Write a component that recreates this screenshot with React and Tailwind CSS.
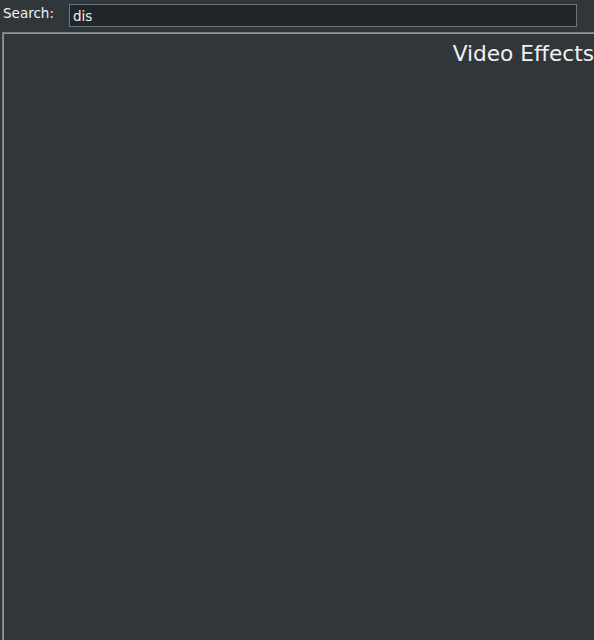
export default function App() {
  return (
    <div
      className="flex h-[640px] w-[594px] flex-col overflow-hidden bg-[#31363b] text-[#eff0f1]"
      style={{ fontFamily: '"DejaVu Sans", sans-serif' }}
    >
      <div className="flex h-[32px] items-start">
        <span className="ml-[3px] mt-[5px] w-[66px] text-[13.5px] leading-[16px]">Search:</span>
        <div className="mt-[4px] flex h-[23px] w-[508px] items-center border border-[#6b777b] bg-[#232629] pl-[3px] pt-[2px] text-[13.5px]">
          dis
        </div>
      </div>
      <div className="ml-[2px] flex-1 border border-b-0 border-r-0 border-[#77807f] shadow-[inset_1px_1px_0_#3daee9]">
        <div className="flex justify-end overflow-hidden pt-[8px]">
          <span className="whitespace-nowrap text-[21.7px] leading-[26px] text-[#eff0f1]">Video Effects</span>
        </div>
      </div>
    </div>
  );
}
